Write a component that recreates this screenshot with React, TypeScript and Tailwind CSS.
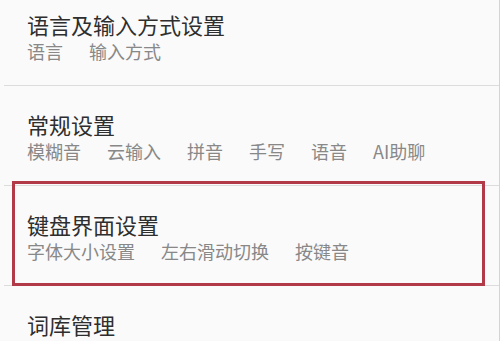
const sections = [
  { title: "语言及输入方式设置", items: ["语言", "输入方式"] },
  { title: "常规设置", items: ["模糊音", "云输入", "拼音", "手写", "语音", "AI助聊"] },
  { title: "键盘界面设置", items: ["字体大小设置", "左右滑动切换", "按键音"], highlight: true },
  { title: "词库管理", items: ["词库同步", "词语导入与导出", "云备份"] },
];

export default function App() {
  return (
    <div
      className="w-[500px] h-[341px] overflow-hidden bg-[#fafafa] border-r border-[#d4d4d4]"
      style={{ fontFamily: '"Noto Sans CJK SC", "Noto Sans", sans-serif' }}
    >
      <div className="-mt-[14px]">
        {sections.map((s, i) => (
          <div key={i}>
            <div className="relative h-[99px] pt-[24px] pl-[27px]">
              {s.highlight && (
                <div className="absolute left-[12px] right-[14px] -top-[5px] bottom-[-1px] border-[3px] border-[#b23a48]" />
              )}
              <p className="text-[22px] leading-[28px] text-[#2e2e2e]">{s.title}</p>
              <div className="flex gap-[26px] text-[18px] leading-[26px] text-[#888888]">
                {s.items.map((it) => (
                  <span key={it}>{it}</span>
                ))}
              </div>
            </div>
            <div className="ml-[4px] h-px bg-[#dcdcdc]" />
          </div>
        ))}
      </div>
    </div>
  );
}
